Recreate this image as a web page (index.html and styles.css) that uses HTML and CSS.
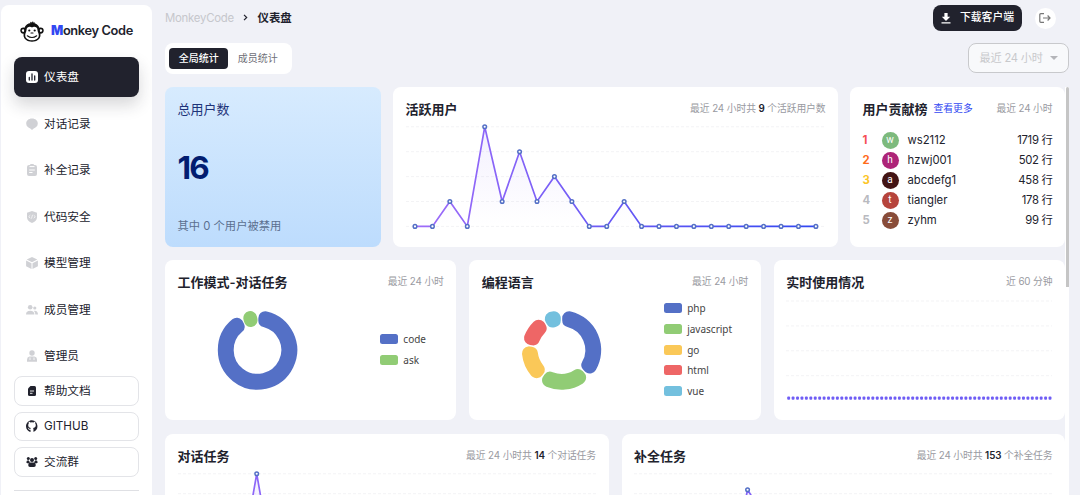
FILE: index.html
```html
<!DOCTYPE html>
<html lang="zh-CN">
<head>
    <meta charset="UTF-8">
    <meta name="viewport" content="width=device-width, initial-scale=1.0">
    <title>MonkeyCode</title>
    <link rel="stylesheet" href="styles.css">
</head>
<body>
    <aside class="sidebar">
        <div class="logo">
            <svg width="24" height="22" viewBox="0 0 24 22">
                <path d="M9.5 2.6L10.5 1.6L10 .8L12 1.4L13 .1L13.3 1.6L15 1.6L14.5 3Z" fill="#111"/>
                <circle cx="3.4" cy="9.6" r="3.1" fill="#111"/>
                <circle cx="20.6" cy="9.6" r="3.1" fill="#111"/>
                <circle cx="3.2" cy="9.6" r="1.3" fill="#fff"/>
                <circle cx="20.8" cy="9.6" r="1.3" fill="#fff"/>
                <path d="M12 2C6.8 2 4.2 5.3 4.2 9.5C4.2 11 3.5 12.3 3.5 14C3.5 18 7.2 20.7 12 20.7S20.5 18 20.5 14C20.5 12.3 19.8 11 19.8 9.5C19.8 5.3 17.2 2 12 2Z" fill="#111"/>
                <path d="M12 6.6C10.8 5.2 6.5 5.2 6.5 9C6.5 11 5.2 12 5.2 14.2C5.2 17.4 8.2 19.3 12 19.3S18.8 17.4 18.8 14.2C18.8 12 17.5 11 17.5 9C17.5 5.2 13.2 5.2 12 6.6Z" fill="#fff"/>
                <circle cx="9.3" cy="9.5" r="1.1" fill="#111"/>
                <circle cx="14.7" cy="9.5" r="1.1" fill="#111"/>
                <path d="M11 12H13M7.3 14.8Q12 18.3 16.7 14.8" fill="none" stroke="#111" stroke-width="1.1" stroke-linecap="round"/>
            </svg>
            <span class="logo-text"><b>M</b>onkey Code</span>
        </div>

        <nav class="nav">
            <a class="nav-item active">
                <svg class="icon" viewBox="0 0 12 12"><rect width="12" height="12" rx="3" fill="#fff"/><path d="M3.3 6.5V9M6 3V9M8.7 5V9" stroke="#21222d" stroke-width="1.3" stroke-linecap="round"/></svg>
                仪表盘
            </a>
            <a class="nav-item">
                <svg class="icon" viewBox="0 0 12 12"><path d="M6 .5C2.5 .5 .2 2.7 .2 5.5S2.5 10 4.3 10.4L6 12L7.7 10.4C9.5 10 11.8 8.3 11.8 5.5S9.5 .5 6 .5Z"/></svg>
                对话记录
            </a>
            <a class="nav-item">
                <svg class="icon" viewBox="0 0 12 12"><path d="M3 1H4Q4 0 5 0H7Q8 0 8 1H9Q11 1 11 3V10Q11 12 9 12H3Q1 12 1 10V3Q1 1 3 1Z"/><path d="M3.5 2.6H8.5M3.2 6H8.8M3.2 8.5H6.5" stroke="#fff"/></svg>
                补全记录
            </a>
            <a class="nav-item">
                <svg class="icon" viewBox="0 0 12 12"><path d="M6 0L11 1.7V6.5C11 9 9 10.8 6 12C3 10.8 1 9 1 6.5V1.7Z"/><path d="M4.3 4.2L2.7 5.7L4.3 7.2M7.7 4.2L9.3 5.7L7.7 7.2M6.5 3.8L5.5 7.6" stroke="#fff" stroke-width=".7" fill="none"/></svg>
                代码安全
            </a>
            <a class="nav-item">
                <svg class="icon" viewBox="0 0 12 12"><path d="M6 0L11.3 2.6L6 5.3L.7 2.6ZM.1 3.6L5.5 6.3V12L.1 9.3ZM11.9 3.6L6.5 6.3V12L11.9 9.3Z"/></svg>
                模型管理
            </a>
            <a class="nav-item">
                <svg class="icon" viewBox="0 0 12 12"><circle cx="4.2" cy="3.3" r="2.3"/><path d="M0 10.5C0 8 1.5 6.8 4.2 6.8S8.4 8 8.4 10.5Z"/><circle cx="8.8" cy="4" r="1.6"/><path d="M9.3 10.5Q9.3 8 8 6.9C10.5 6.5 12 8 12 10.5Z"/></svg>
                成员管理
            </a>
            <a class="nav-item">
                <svg class="icon" viewBox="0 0 12 12"><circle cx="6" cy="3" r="2.7"/><path d="M1 11.8V9.5Q1 7 3.5 6.6H8.5Q11 7 11 9.5V11.8Z"/><path d="M4 7.5V10M8 7.5V10" stroke="#fff" stroke-width=".8"/></svg>
                管理员
            </a>
        </nav>

        <div class="links">
            <a class="link-btn">
                <svg class="icon" viewBox="0 0 12 12"><path d="M4.5 1H8.5Q10 1 10 2.5V9.5Q10 11 8.5 11H3.5Q2 11 2 9.5V3.5Z"/><path d="M4 6H8M4 8.3H6.5" stroke="#fff" stroke-width=".9"/></svg>
                帮助文档
            </a>
            <a class="link-btn">
                <svg class="icon" viewBox="0 0 24 24"><path d="M12 .5C5.400.5 0 5.900 0 12.500c0 5.300 3.400 9.800 8.200 11.400.6.100.8-.300.8-.600v-4c-3.300.700-4-1.400-4-1.400-.5-1.400-1.300-1.800-1.300-1.800-1.100-.7.100-.7.100-.7 1.200.100 1.800 1.200 1.800 1.200 1.100 1.800 2.800 1.300 3.500 1 .1-.8.400-1.300.8-1.600-2.700-.3-5.500-1.300-5.500-5.900 0-1.300.5-2.400 1.200-3.200-.1-.3-.5-1.500.1-3.200 0 0 1-.3 3.300 1.200a11.500 11.500 0 0 1 6 0c2.300-1.500 3.300-1.200 3.300-1.200.7 1.700.2 2.900.1 3.200.8.800 1.200 1.900 1.200 3.200 0 4.600-2.800 5.600-5.500 5.900.400.4.8 1.100.8 2.200v4.600c0 .3.200.7.8.6A12 12 0 0 0 12 .5Z"/></svg>
                GITHUB
            </a>
            <a class="link-btn">
                <svg class="icon" viewBox="0 0 12 12"><circle cx="2.3" cy="2.4" r="1.5"/><circle cx="9.7" cy="2.4" r="1.5"/><circle cx="6" cy="4" r="2"/><path d="M.3 6.5Q.3 4.3 2.5 4.3L4 6.2L3 7.2H1.2ZM11.7 6.5Q11.7 4.3 9.5 4.3L8 6.2L9 7.2H10.8ZM2.2 9Q2.2 6.7 4.5 6.5H7.5Q9.8 6.7 9.8 9Q9.8 11 8 11H4Q2.2 11 2.2 9Z"/></svg>
                交流群
            </a>
        </div>
        <div class="divider"></div>
    </aside>

    <main class="main">
        <header class="header">
            <div class="breadcrumb">
                <span class="crumb-root">MonkeyCode</span>
                <svg width="5" height="7" viewBox="0 0 5 7"><path d="M1 .8L3.7 3.5L1 6.2" fill="none" stroke="#21222d" stroke-width="1.2"/></svg>
                <strong>仪表盘</strong>
            </div>
            <div class="actions">
                <button class="download">
                    <svg width="10" height="11" viewBox="0 0 10 11"><path d="M3.4 0H6.6V3.8H9.2L5 8L.8 3.8H3.4ZM.5 9.3H9.5V10.6H.5Z" fill="#fff"/></svg>
                    下载客户端
                </button>
                <button class="logout">
                    <svg width="12" height="10" viewBox="0 0 12 10"><path d="M5 .7H1.8Q.8 .7 .8 1.7V8.3Q.8 9.3 1.8 9.3H5M4 5H11M8.6 2.5L11 5L8.6 7.5" fill="none" stroke="#777" stroke-width="1.2"/></svg>
                </button>
            </div>
        </header>

        <div class="toolbar">
            <div class="tabs">
                <span class="tab selected">全局统计</span>
                <span class="tab">成员统计</span>
            </div>
            <div class="select">最近 24 小时 <i class="caret"></i></div>
        </div>

        <div class="scroll">
            <div class="board">
                <div class="row row-top">
                    <section class="card total">
                        <div class="total-title">总用户数</div>
                        <div class="total-num">16</div>
                        <div class="total-note">其中 0 个用户被禁用</div>
                    </section>
                    <section class="card">
                        <div class="card-head"><h3>活跃用户</h3><span class="meta">最近 24 小时共 <b>9</b> 个活跃用户数</span></div>
                        <svg class="line-chart" id="activeUsers" width="419" height="112"></svg>
                    </section>
                    <section class="card">
                        <div class="card-head"><h3>用户贡献榜</h3><a class="more">查看更多</a><span class="meta">最近 24 小时</span></div>
                        <ul class="rank">
                            <li><b class="r1">1</b><i class="avatar a1">w</i><span>ws2112</span><em>1719 行</em></li>
                            <li><b class="r2">2</b><i class="avatar a2">h</i><span>hzwj001</span><em>502 行</em></li>
                            <li><b class="r3">3</b><i class="avatar a3">a</i><span>abcdefg1</span><em>458 行</em></li>
                            <li><b>4</b><i class="avatar a4">t</i><span>tiangler</span><em>178 行</em></li>
                            <li><b>5</b><i class="avatar a5">z</i><span>zyhm</span><em>99 行</em></li>
                        </ul>
                    </section>
                </div>

                <div class="row row-mid">
                    <section class="card">
                        <div class="card-head"><h3>工作模式-对话任务</h3><span class="meta">最近 24 小时</span></div>
                        <div class="pie">
                            <svg id="modePie" width="159" height="84" viewBox="-79.5 -42 159 84"></svg>
                            <ul class="legend legend-sm">
                                <li><i class="c1"></i>code</li>
                                <li><i class="c2"></i>ask</li>
                            </ul>
                        </div>
                    </section>
                    <section class="card">
                        <div class="card-head"><h3>编程语言</h3><span class="meta">最近 24 小时</span></div>
                        <div class="pie">
                            <svg id="langPie" width="159" height="84" viewBox="-79.5 -42 159 84"></svg>
                            <ul class="legend">
                                <li><i class="c1"></i>php</li>
                                <li><i class="c2"></i>javascript</li>
                                <li><i class="c3"></i>go</li>
                                <li><i class="c4"></i>html</li>
                                <li><i class="c5"></i>vue</li>
                            </ul>
                        </div>
                    </section>
                    <section class="card">
                        <div class="card-head"><h3>实时使用情况</h3><span class="meta">近 60 分钟</span></div>
                        <svg class="bar-chart" id="realtime" width="266" height="112"></svg>
                    </section>
                </div>

                <div class="row row-bottom">
                    <section class="card">
                        <div class="card-head"><h3>对话任务</h3><span class="meta">最近 24 小时共 <b>14</b> 个对话任务</span></div>
                        <svg class="line-chart" id="chatTasks" width="419" height="112"></svg>
                    </section>
                    <section class="card">
                        <div class="card-head"><h3>补全任务</h3><span class="meta">最近 24 小时共 <b>153</b> 个补全任务</span></div>
                        <svg class="line-chart" id="codeTasks" width="419" height="112"></svg>
                    </section>
                </div>
            </div>
            <div class="scrollbar"><div class="thumb"></div></div>
        </div>
    </main>

    <script>
        var COLORS = ['#5470c6', '#91cc75', '#fac858', '#ee6666', '#73c0de'];

        function gridLines(width, count, step, top) {
            var out = '';
            for (var i = 0; i < count; i++) {
                var y = top + i * step;
                out += '<line class="grid" x1="0" x2="' + width + '" y1="' + y + '" y2="' + y + '"/>';
            }
            return out;
        }

        function drawLine(id, data, max, lines) {
            var svg = document.getElementById(id);
            var top = 5.8, height = 99.6, left = 9, step = 17.43;
            var pts = data.map(function (v, i) {
                return [left + i * step, top + height * (1 - v / max)];
            });
            var path = pts.map(function (p) { return p.join(','); }).join(' ');
            var base = top + height;
            svg.innerHTML =
                '<defs>' +
                '<linearGradient id="' + id + 'Line" gradientUnits="userSpaceOnUse" x1="9" y1="0" x2="410" y2="0">' +
                '<stop offset="0" stop-color="#9f6cf9"/><stop offset="1" stop-color="#3248f2"/></linearGradient>' +
                '<linearGradient id="' + id + 'Area" x1="0" y1="0" x2="0" y2="1">' +
                '<stop offset="0" stop-color="#8b6cf5" stop-opacity=".1"/><stop offset="1" stop-color="#8b6cf5" stop-opacity="0"/></linearGradient>' +
                '</defs>' +
                gridLines(419, lines, height / (lines - 1), top) +
                '<polygon fill="url(#' + id + 'Area)" points="' + path + ' ' + pts[pts.length - 1][0] + ',' + base + ' ' + left + ',' + base + '"/>' +
                '<polyline fill="none" stroke="url(#' + id + 'Line)" stroke-width="1.7" points="' + path + '"/>' +
                pts.map(function (p) {
                    return '<circle class="dot" cx="' + p[0] + '" cy="' + p[1] + '" r="1.8"/>';
                }).join('');
        }

        // ring segments: inset shape + round joined stroke gives the rounded corners
        function drawPie(id, data) {
            var total = data.reduce(function (a, b) { return a + b; }, 0);
            var r = 7, outer = 39.7 - r, inner = 23.8 + r, pad = r + 0.7;
            var start = 0, out = '';
            function pt(radius, angle) {
                return (radius * Math.sin(angle)).toFixed(2) + ' ' + (-radius * Math.cos(angle)).toFixed(2);
            }
            data.forEach(function (v, i) {
                var end = start + v / total * Math.PI * 2;
                var po = Math.asin(pad / outer), pi = Math.asin(pad / inner);
                var o1 = start + po, o2 = end - po, i1 = start + pi, i2 = end - pi;
                if (o2 < o1) { o1 = o2 = (start + end) / 2; }
                if (i2 < i1) { i1 = i2 = (start + end) / 2; }
                var big = o2 - o1 > Math.PI ? 1 : 0;
                var w = 2 * Math.min(r, outer * Math.sin((end - start) / 2) - 0.4);
                // narrow segments get a thinner stroke, so stretch them radially
                var ro = 39.7 - w / 2, ri = 23.8 + w / 2;
                out += '<path d="M' + pt(ro, o1) +
                    'A' + ro + ' ' + ro + ' 0 ' + big + ' 1 ' + pt(ro, o2) +
                    'L' + pt(ri, i2) +
                    'A' + ri + ' ' + ri + ' 0 ' + big + ' 0 ' + pt(ri, i1) + 'Z" fill="' + COLORS[i] +
                    '" stroke="' + COLORS[i] + '" stroke-width="' + w + '" stroke-linejoin="round"/>';
                start = end;
            });
            document.getElementById(id).innerHTML = out;
        }

        function drawBars(id, count) {
            var out = gridLines(266, 4, 24.9, 6);
            for (var i = 0; i < count; i++) {
                out += '<rect x="' + (1.2 + i * 4.43) + '" y="101.5" width="2.9" height="3.3" rx="1" fill="#6f5df5"/>';
            }
            document.getElementById(id).innerHTML = out;
        }

        drawLine('activeUsers', [0,0,1,0,4,1,3,1,2,1,0,0,1,0,0,0,0,0,0,0,0,0,0,0], 4, 5);
        drawLine('chatTasks', [0,0,0,0,5,0,0,0,2,1,0,0,1,0,0,0,0,0,0,0,0,0,0,0], 5, 6);
        drawLine('codeTasks', [0,0,0,0,0,0,42,28,10,0,0,4,0,0,0,0,0,0,0,0,0,0,0,0], 50, 6);
        drawPie('modePie', [13, 1]);
        drawPie('langPie', [13, 8, 6, 5, 3]);
        drawBars('realtime', 60);
    </script>
</body>
</html>
```
FILE: styles.css
```css
* {
    box-sizing: border-box;
}
body {
    margin: 0;
    height: 495px;
    overflow: hidden;
    display: flex;
    background-color: #f0f1f7;
    color: #21222d;
    font-family: Inter, "Noto Sans CJK SC", sans-serif;
    font-size: 11.67px;
    line-height: 16px;
}
h3, ul {
    margin: 0;
    padding: 0;
}
li {
    list-style: none;
}
svg {
    display: block;
    flex-shrink: 0;
}
button {
    border: none;
    padding: 0;
    font: inherit;
    display: flex;
    align-items: center;
    justify-content: center;
}

/* Sidebar */
.sidebar {
    width: 151px;
    height: 490px;
    margin: 5px 0 0 1px;
    padding: 16px 13px 0 12.5px;
    background-color: #fff;
    border-radius: 8px 8px 0 0;
    flex-shrink: 0;
    overflow: hidden;
}
.logo {
    display: flex;
    align-items: center;
    gap: 7px;
    height: 22px;
    padding-left: 6.5px;
    margin-bottom: 14px;
}
.logo-text {
    font-size: 12.8px;
    font-weight: 600;
    letter-spacing: -0.35px;
    line-height: 18px;
    padding-bottom: 2px;
    white-space: nowrap;
}
.logo-text b {
    color: #3248f2;
}
.nav {
    display: flex;
    flex-direction: column;
    gap: 6.5px;
}
.nav-item {
    display: flex;
    align-items: center;
    gap: 6px;
    height: 40px;
    padding-left: 12.5px;
    border-radius: 8px;
}
.nav-item.active {
    background-color: #21222d;
    color: #fff;
    box-shadow: 0 8px 16px rgba(33, 34, 45, 0.18);
}
.icon {
    width: 12px;
    height: 12px;
    fill: #d0d1d5;
}
.links {
    display: flex;
    flex-direction: column;
    gap: 6.2px;
}
.link-btn {
    display: flex;
    align-items: center;
    gap: 6px;
    height: 29.5px;
    padding-left: 11.5px;
    border: 1px solid #e3e4e8;
    border-radius: 8px;
}
.link-btn .icon {
    fill: #21222d;
}
.divider {
    margin-top: 13px;
    border-top: 1px solid #dfe0e4;
}

/* Header */
.main {
    width: 904px;
    height: 495px;
    margin-left: 13px;
    padding-top: 5px;
    flex-shrink: 0;
    overflow: hidden;
}
.header, .toolbar {
    display: flex;
    justify-content: space-between;
    align-items: center;
}
.header {
    height: 26px;
}
.breadcrumb {
    display: flex;
    align-items: center;
    gap: 9.3px;
    padding-bottom: 1px;
    font-size: 11.4px;
}
.crumb-root {
    color: #c6c7cc;
    letter-spacing: -0.25px;
}
.actions {
    display: flex;
    align-items: center;
    gap: 12.5px;
    margin-right: 13.5px;
}
.download {
    width: 89px;
    height: 25.5px;
    gap: 9px;
    border-radius: 8px;
    background-color: #21222d;
    color: #fff;
    font-size: 10.8px;
    font-weight: 500;
}
.logout {
    width: 21px;
    height: 21px;
    border-radius: 50%;
    background-color: #fff;
}
.toolbar {
    margin-top: 12px;
    height: 30.5px;
}
.tabs {
    display: flex;
    align-items: center;
    width: 127px;
    height: 30.5px;
    padding-left: 4.3px;
    background-color: #fff;
    border-radius: 8px;
}
.tab {
    width: 59px;
    height: 21px;
    line-height: 21px;
    text-align: center;
    font-size: 10px;
    color: #6f7078;
}
.tab.selected {
    background-color: #21222d;
    border-radius: 4px;
    color: #fff;
    font-weight: 500;
}
.select {
    display: flex;
    align-items: center;
    justify-content: space-between;
    width: 101px;
    height: 30px;
    padding: 0 10.5px;
    border: 1px solid #c8c9cc;
    border-radius: 8px;
    background-color: #f8f9fb;
    color: #c8c9cc;
    font-size: 11.2px;
    letter-spacing: -0.2px;
    white-space: nowrap;
}
.caret {
    border: 4px solid transparent;
    border-top-color: #b4b5b9;
    border-bottom: none;
}

/* Board */
.scroll {
    display: flex;
    height: 408px;
    margin-top: 13.5px;
    overflow: hidden;
}
.board {
    width: 900px;
}
.scrollbar {
    width: 4px;
    height: 408px;
    background-color: #fff;
}
.thumb {
    width: 3px;
    height: 200px;
    margin-left: .5px;
    background-color: #c5c5c5;
    border-radius: 2px 2px 0 0;
}
.row {
    display: grid;
    gap: 13px;
    margin-bottom: 13.3px;
}
.row-top {
    grid-template-columns: 216px 445px 215px;
    gap: 12px;
}
.row-mid {
    grid-template-columns: repeat(3, 1fr);
}
.row-bottom {
    grid-template-columns: repeat(2, 1fr);
}
.card {
    height: 160px;
    padding: 13px 12.5px;
    background-color: #fff;
    border-radius: 8px;
    overflow: hidden;
}
.card-head {
    display: flex;
    align-items: center;
    height: 18px;
}
.card-head h3 {
    font-size: 13px;
    font-weight: 600;
    white-space: nowrap;
}
.meta {
    margin-left: auto;
    font-size: 9.8px;
    letter-spacing: -0.1px;
    color: #999aa1;
    white-space: nowrap;
}
.meta b {
    color: #21222d;
    font-weight: 600;
}
.more {
    margin-left: 6px;
    font-size: 9.8px;
    color: #3248f2;
}
.total {
    display: flex;
    flex-direction: column;
    justify-content: space-between;
    background: linear-gradient(180deg, #d7ebfe, #bddcfd);
}
.total-title {
    font-size: 13px;
    line-height: 18px;
    color: #1e3379;
}
.total-num {
    font-size: 31.5px;
    line-height: 36px;
    font-weight: 700;
    letter-spacing: -1.8px;
    color: #021d70;
}
.total-note {
    font-size: 11.3px;
    color: #5b6f8f;
}

/* Charts */
.line-chart {
    margin-top: 3.3px;
}
.bar-chart {
    margin-top: 3.3px;
}
.grid {
    stroke: #f3f3f5;
    stroke-width: 1;
    stroke-dasharray: 3 2;
}
.dot {
    fill: #fff;
    stroke: #5470c6;
    stroke-width: 1.5;
}
.pie {
    display: flex;
    align-items: center;
    justify-content: space-between;
    height: 114px;
    margin-top: 1.3px;
}
.legend {
    width: 84.5px;
    font-family: "Noto Sans", sans-serif;
    font-size: 10px;
    color: #444;
}
.legend-sm {
    width: 64px;
}
.legend li {
    display: flex;
    align-items: center;
    gap: 5px;
    height: 20.8px;
}
.legend i {
    width: 18.5px;
    height: 10px;
    border-radius: 2.5px;
}
.c1 {
    background-color: #5470c6;
}
.c2 {
    background-color: #91cc75;
}
.c3 {
    background-color: #fac858;
}
.c4 {
    background-color: #ee6666;
}
.c5 {
    background-color: #73c0de;
}

/* Ranking */
.rank {
    margin-top: 12px;
}
.rank li {
    display: flex;
    align-items: center;
    height: 20px;
    font-size: 11.3px;
}
.rank b {
    width: 19px;
    color: #b9babf;
}
.rank .r1 {
    color: #f64e54;
}
.rank .r2 {
    color: #ff6b1a;
}
.rank .r3 {
    color: #fcc527;
}
.rank em {
    margin-left: auto;
    font-style: normal;
    letter-spacing: -0.3px;
}
.avatar {
    width: 17px;
    height: 17px;
    margin-right: 9px;
    border-radius: 50%;
    font-family: Roboto, sans-serif;
    font-size: 10px;
    font-style: normal;
    line-height: 16px;
    text-align: center;
    color: #fff;
}
.a1 {
    background-color: #7dba7d;
}
.a2 {
    background-color: #ad2478;
}
.a3 {
    background-color: #431414;
}
.a4 {
    background-color: #b6443c;
}
.a5 {
    background-color: #884c39;
}
```
